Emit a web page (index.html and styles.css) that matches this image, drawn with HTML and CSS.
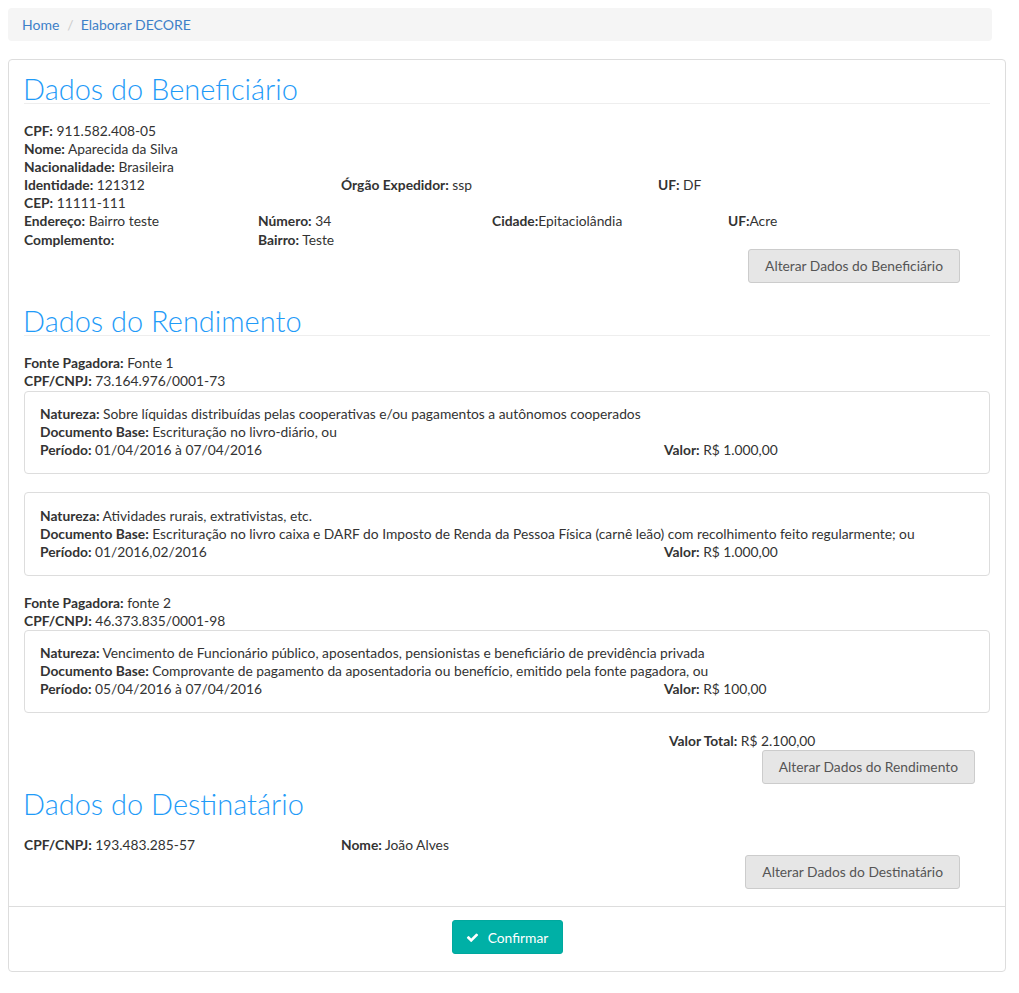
FILE: index.html
```html
<!DOCTYPE html>
<html lang="pt-BR">
<head>
<meta charset="utf-8">
<title>Elaborar DECORE</title>
<link rel="stylesheet" href="styles.css">
</head>
<body>
<ol class="breadcrumb">
  <li><a href="#">Home</a></li>
  <li class="sep">/</li>
  <li><a href="#">Elaborar DECORE</a></li>
</ol>

<div class="panel">
  <div class="panel-body">
    <h2 class="section-title underline">Dados do Beneficiário</h2>
    <div class="info first">
      <div><b>CPF:</b> 911.582.408-05</div>
      <div><b>Nome:</b> Aparecida da Silva</div>
      <div><b>Nacionalidade:</b> Brasileira</div>
      <div class="row3">
        <div><b>Identidade:</b> 121312</div>
        <div><b>Órgão Expedidor:</b> ssp</div>
        <div><b>UF:</b> DF</div>
      </div>
      <div><b>CEP:</b> 11111-111</div>
      <div class="row4">
        <div><b>Endereço:</b> Bairro teste</div>
        <div><b>Número:</b> 34</div>
        <div><b>Cidade:</b>Epitaciolândia</div>
        <div><b>UF:</b>Acre</div>
      </div>
      <div class="row4 r19">
        <div><b>Complemento:</b></div>
        <div><b>Bairro:</b> Teste</div>
      </div>
    </div>
    <div class="actions pad30">
      <button class="btn">Alterar Dados do Beneficiário</button>
    </div>

    <h2 class="section-title underline sec2">Dados do Rendimento</h2>
    <div class="info first">
      <div><b>Fonte Pagadora:</b> Fonte 1</div>
      <div><b>CPF/CNPJ:</b> 73.164.976/0001-73</div>
    </div>
    <div class="card">
      <div><b>Natureza:</b> Sobre líquidas distribuídas pelas cooperativas e/ou pagamentos a autônomos cooperados</div>
      <div><b>Documento Base:</b> Escrituração no livro-diário, ou</div>
      <div class="card-row"><div><b>Período:</b> 01/04/2016 à 07/04/2016</div><div><b>Valor:</b> R$ 1.000,00</div></div>
    </div>
    <div class="card tall">
      <div><b>Natureza:</b> Atividades rurais, extrativistas, etc.</div>
      <div><b>Documento Base:</b> Escrituração no livro caixa e DARF do Imposto de Renda da Pessoa Física (carnê leão) com recolhimento feito regularmente; ou</div>
      <div class="card-row"><div><b>Período:</b> 01/2016,02/2016</div><div><b>Valor:</b> R$ 1.000,00</div></div>
    </div>
    <div class="info src2">
      <div><b>Fonte Pagadora:</b> fonte 2</div>
      <div><b>CPF/CNPJ:</b> 46.373.835/0001-98</div>
    </div>
    <div class="card flush">
      <div><b>Natureza:</b> Vencimento de Funcionário público, aposentados, pensionistas e beneficiário de previdência privada</div>
      <div><b>Documento Base:</b> Comprovante de pagamento da aposentadoria ou benefício, emitido pela fonte pagadora, ou</div>
      <div class="card-row"><div><b>Período:</b> 05/04/2016 à 07/04/2016</div><div><b>Valor:</b> R$ 100,00</div></div>
    </div>
    <div class="total"><b>Valor Total:</b> R$ 2.100,00</div>
    <div class="actions pad15">
      <button class="btn">Alterar Dados do Rendimento</button>
    </div>

    <h2 class="section-title sec3">Dados do Destinatário</h2>
    <div class="info first">
      <div class="row3">
        <div><b>CPF/CNPJ:</b> 193.483.285-57</div>
        <div><b>Nome:</b> João Alves</div>
      </div>
    </div>
    <div class="actions pad30 last">
      <button class="btn">Alterar Dados do Destinatário</button>
    </div>
  </div>
  <div class="panel-footer">
    <button class="btn-confirm">
      <svg class="check" viewBox="0 0 1792 1792" width="13" height="13" aria-hidden="true"><path fill="#fff" d="M1671 566q0 40-28 68l-724 724-136 136q-28 28-68 28t-68-28l-136-136-362-362q-28-28-28-68t28-68l136-136q28-28 68-28t68 28l294 295 656-657q28-28 68-28t68 28l136 136q28 28 28 68z"/></svg>
      Confirmar
    </button>
  </div>
</div>
</body>
</html>
```

FILE: styles.css
```css
* { box-sizing: border-box; }

body {
  margin: 8px;
  font-family: Lato, "Open Sans", "DejaVu Sans", sans-serif;
  font-size: 13.8px;
  line-height: 18px;
  color: #333;
  background: #fff;
}

b { font-weight: 700; color: #333; }

.breadcrumb {
  list-style: none;
  margin: 0 19px 18px 0;
  padding: 8px 14px;
  height: 33px;
  line-height: 17px;
  font-size: 14px;
  background: #f5f5f5;
  border-radius: 4px;
  display: flex;
}
.breadcrumb a { color: #3d80c8; text-decoration: none; }
.breadcrumb .sep { color: #ccc; padding: 0 7px 0 8px; }

.panel {
  margin-right: 5px;
  border: 1px solid #ddd;
  border-radius: 4px;
  background: #fff;
}

.panel-body { padding: 15px 15px 0 15px; }

.section-title {
  margin: 0 0 0 -1px;
  font-size: 29px;
  font-weight: 300;
  line-height: 28px;
  height: 28px;
  color: #1f9bf8;
}
.section-title.underline { border-bottom: 1px solid #eee; height: 29px; margin-left: 0; padding-left: 0; }
.section-title.underline { text-indent: -1px; }
.sec2 { margin-top: 24px; }
.sec3 { margin-top: 6px; }

.info.first { margin-top: 18px; }

.row3 { display: grid; grid-template-columns: 317px 317px 1fr; }
.row4 { display: grid; grid-template-columns: 234px 234px 236px 1fr; }
.r19 { margin-top: 1px; }

.actions { display: flex; justify-content: flex-end; }
.actions.pad30 { padding-right: 30px; }
.actions.pad15 { padding-right: 15px; }
.actions.last { margin-top: 1px; padding-bottom: 17px; }

.btn {
  font-family: inherit;
  font-size: 13.8px;
  color: #555;
  background: #e6e6e6;
  border: 1px solid #ccc;
  border-radius: 3px;
  height: 34px;
  padding: 0 16px;
  line-height: 32px;
}

.card {
  margin-top: 1px;
  border: 1px solid #ddd;
  border-radius: 4px;
  padding: 13px 15px 14px 15px;
  margin-bottom: 18px;
}
.card.tall { padding-top: 14px; padding-bottom: 14px; }
.card.flush { margin-top: 0; }
.card-row { display: grid; grid-template-columns: 624px 1fr; }

.total { padding-left: 645px; margin-top: 19px; line-height: 18px; }

.panel-footer {
  border-top: 1px solid #ddd;
  padding: 13px 15px 17px;
  display: flex;
  justify-content: center;
}

.btn-confirm {
  font-family: inherit;
  font-size: 13.8px;
  color: #fff;
  background: #00b0a6;
  border: 1px solid #00a89e;
  border-radius: 3px;
  height: 34px;
  width: 111px;
  padding: 0 10px;
  display: flex;
  align-items: center;
  gap: 9px;
  justify-content: center;
}
.check { display: block; }
```
